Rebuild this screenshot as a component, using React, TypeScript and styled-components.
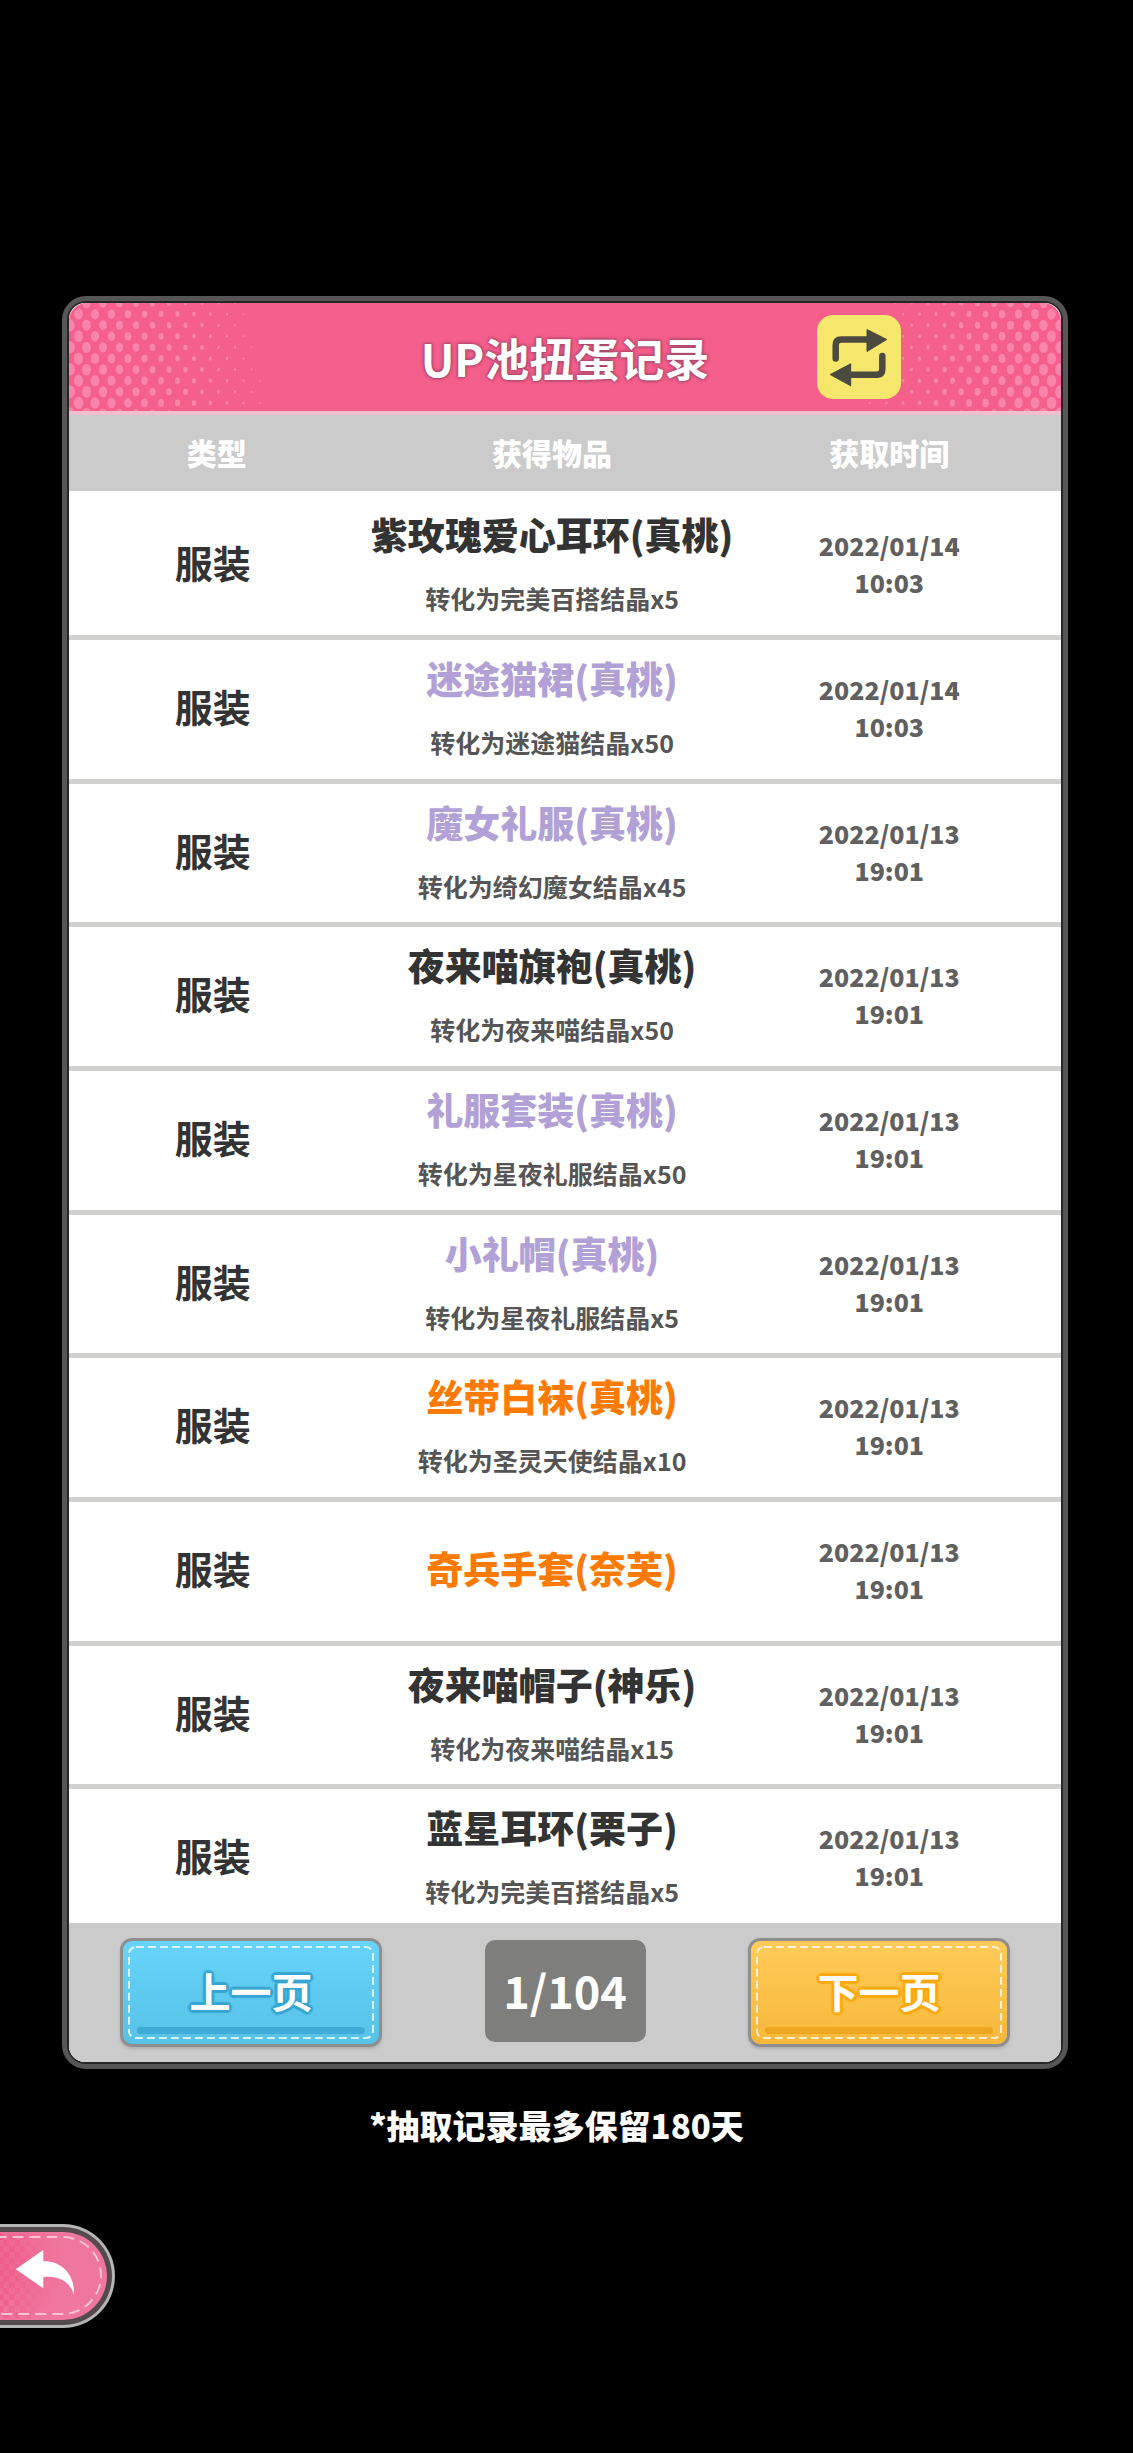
import React, { useState } from "react";
import styled, { createGlobalStyle } from "styled-components";

const GlobalStyle = createGlobalStyle`
  *, *::before, *::after { box-sizing: border-box; }
  html, body { margin: 0; background: #000; }
  body, button { font-family: "Noto Sans CJK SC", "Noto Sans", sans-serif; font-weight: 700; }
`;

type Rarity = "common" | "rare" | "epic";

interface Draw {
  kind: string;
  name: string;
  rarity: Rarity;
  converted?: string;
  date: string;
  time: string;
}

const rarityColor: Record<Rarity, string> = {
  common: "#333333",
  rare: "#b2a1d6",
  epic: "#fd7a03",
};

const draws: Draw[] = [
  { kind: "服装", name: "紫玫瑰爱心耳环(真桃)", rarity: "common", converted: "转化为完美百搭结晶x5", date: "2022/01/14", time: "10:03" },
  { kind: "服装", name: "迷途猫裙(真桃)", rarity: "rare", converted: "转化为迷途猫结晶x50", date: "2022/01/14", time: "10:03" },
  { kind: "服装", name: "魔女礼服(真桃)", rarity: "rare", converted: "转化为绮幻魔女结晶x45", date: "2022/01/13", time: "19:01" },
  { kind: "服装", name: "夜来喵旗袍(真桃)", rarity: "common", converted: "转化为夜来喵结晶x50", date: "2022/01/13", time: "19:01" },
  { kind: "服装", name: "礼服套装(真桃)", rarity: "rare", converted: "转化为星夜礼服结晶x50", date: "2022/01/13", time: "19:01" },
  { kind: "服装", name: "小礼帽(真桃)", rarity: "rare", converted: "转化为星夜礼服结晶x5", date: "2022/01/13", time: "19:01" },
  { kind: "服装", name: "丝带白袜(真桃)", rarity: "epic", converted: "转化为圣灵天使结晶x10", date: "2022/01/13", time: "19:01" },
  { kind: "服装", name: "奇兵手套(奈芙)", rarity: "epic", date: "2022/01/13", time: "19:01" },
  { kind: "服装", name: "夜来喵帽子(神乐)", rarity: "common", converted: "转化为夜来喵结晶x15", date: "2022/01/13", time: "19:01" },
  { kind: "服装", name: "蓝星耳环(栗子)", rarity: "common", converted: "转化为完美百搭结晶x5", date: "2022/01/13", time: "19:01" },
];

const Page = styled.main`
  display: flex;
  flex-direction: column;
  align-items: stretch;
  padding: 296px 0 124px;
  background: #000;
`;

const Panel = styled.section`
  margin: 0 65px 0 62px;
  padding: 2px;
  border: 5px solid #565656;
  border-radius: 24px;
  background: #262626;
`;

const Sheet = styled.div`
  border-radius: 16px;
  overflow: hidden;
  background: #fff;
`;

const Header = styled.header`
  position: relative;
  display: grid;
  grid-template-columns: 1fr auto 1fr;
  align-items: center;
  height: 108px;
  border-radius: 18px 18px 0 0;
  overflow: hidden;
  background: #f55f8c;
`;

const Dots = styled.svg<{ $side: "left" | "right" }>`
  position: absolute;
  top: 0;
  ${(p) => p.$side}: 0;
  transform: ${(p) => (p.$side === "right" ? "scaleX(-1)" : "none")};
  fill: #f985aa;
`;

const Title = styled.h1`
  grid-column: 2;
  margin: 0;
  padding-top: 2px;
  font-size: 45px;
  line-height: 60px;
  font-weight: 700;
  color: #fff;
  text-shadow: 0 0 3px #a8476a, 0 0 3px #a8476a, 0 0 4px #a8476a;
`;

const SwitchButton = styled.button`
  position: relative;
  justify-self: start;
  width: 84px;
  height: 84px;
  margin-left: 108px;
  padding: 0;
  border: 0;
  border-radius: 16px;
  background: #f4e76b;
  cursor: pointer;

  svg { display: block; }
`;

const Table = styled.table`
  width: 100%;
  table-layout: fixed;
  border-collapse: separate;
  border-spacing: 0;
  border-top: 4px solid #efbfd0;
`;

const Column = styled.col<{ $share: string }>`
  width: ${(p) => p.$share};
`;

const HeadCell = styled.th`
  height: 76px;
  padding: 0 0 2px;
  background: #cbcbcb;
  font-size: 30px;
  line-height: 40px;
  font-weight: 900;
  color: #fff;

  &:first-child { padding-left: 8px; }
  &:nth-child(2) { padding-left: 4px; }
  &:last-child { padding-right: 26px; }
`;

const Row = styled.tr``;

const Cell = styled.td`
  height: 144px;
  padding: 0;
  border-top: 5px solid #d0d0cf;
  vertical-align: top;
  text-align: center;

  ${Row}:first-child > & { border-top-color: #fff; }
  ${Row}:nth-child(3n) > & { height: 143px; }
  ${Row}:last-child > & { height: 139px; }
  &:nth-child(2) { padding-left: 4px; }
  &:last-child { padding-right: 26px; }
`;

const Stack = styled.div`
  display: flex;
  flex-direction: column;
  align-items: center;
  justify-content: center;
  height: 132px;
  white-space: nowrap;
`;

const Kind = styled.span`
  font-size: 38px;
  line-height: 56px;
  color: #333;
`;

const ItemName = styled.span<{ $rarity: Rarity }>`
  font-size: 37px;
  line-height: 56px;
  font-weight: 900;
  color: ${(p) => rarityColor[p.$rarity]};
`;

const Converted = styled.span`
  margin-top: 16px;
  font-size: 25px;
  line-height: 40px;
  color: #555;
`;

const Stamp = styled.time`
  padding-top: 4px;
  font-size: 25px;
  line-height: 37px;
  font-weight: 900;
  color: #606060;

  span { display: block; }
`;

const Pager = styled.nav`
  display: flex;
  align-items: center;
  justify-content: space-between;
  height: 139px;
  padding: 0 51px;
  background: #cbcbcb;
`;

type Tone = "blue" | "gold";

const tones: Record<Tone, { top: string; bottom: string; edge: string; bar: string }> = {
  blue: { top: "#68d4fa", bottom: "#57c1e6", edge: "#38a6d2", bar: "#41abd7" },
  gold: { top: "#ffcb58", bottom: "#f7b83c", edge: "#fba910", bar: "#eba71f" },
};

const outline = (c: string) =>
  [[3, 0], [-3, 0], [0, 3], [0, -3], [2, 2], [-2, 2], [2, -2], [-2, -2]]
    .map(([x, y]) => `${x}px ${y}px 1px ${c}`)
    .join(", ");

const PageButton = styled.button<{ $tone: Tone }>`
  position: relative;
  width: 262px;
  height: 109px;
  padding: 0 0 6px;
  border: 3px solid #8f8f8f;
  border-radius: 12px;
  background: linear-gradient(${(p) => tones[p.$tone].top}, ${(p) => tones[p.$tone].bottom});
  box-shadow: 0 2px 3px #b0b0b0;
  font-size: 41px;
  line-height: 56px;
  color: #fff;
  text-shadow: ${(p) => outline(tones[p.$tone].edge)};
  cursor: pointer;

  &::after {
    content: "";
    position: absolute;
    left: 14px;
    right: 14px;
    bottom: 10px;
    height: 7px;
    border-radius: 4px;
    background: ${(p) => tones[p.$tone].bar};
  }
`;

const Stitch = styled.svg`
  position: absolute;
  top: 6px;
  left: 6px;
  width: calc(100% - 12px);
  height: calc(100% - 12px);
  overflow: visible;
  fill: none;
  stroke: #fff;
  stroke-opacity: 0.75;
  stroke-width: 2;
`;

const PageCount = styled.output`
  width: 161px;
  height: 102px;
  margin-bottom: 4px;
  border-radius: 10px;
  background: #7e7e7c;
  font-size: 45px;
  line-height: 100px;
  text-align: center;
  color: #fff;
`;

const Note = styled.p`
  margin: 32px 0 75px;
  padding-right: 20px;
  font-size: 33px;
  line-height: 48px;
  font-weight: 900;
  text-align: center;
  color: #fff;
`;

const BackButton = styled.button`
  position: relative;
  align-self: flex-start;
  display: flex;
  width: 115px;
  height: 104px;
  padding: 0;
  border: 3px solid #b5b5b5;
  border-left: 0;
  border-radius: 0 52px 52px 0;
  background: #544a4d;
  cursor: pointer;
`;

const BackFace = styled.span`
  flex: 1;
  margin: 5px 5px 5px 0;
  border-radius: 0 44px 44px 0;
  overflow: hidden;
  background: radial-gradient(circle at 0 30px, #f0658f, #ef779f 70px);

  svg { display: block; }
`;

function Halftone({ side }: { side: "left" | "right" }) {
  const dots: React.ReactElement[] = [];
  for (let row = 0; row < 11; row++) {
    for (let col = 0; col < 13; col++) {
      const cx = col * 16.5 + (row % 2 ? 9.5 : 1);
      const cy = row * 11.1;
      const size = 1 - cx / 230 - (10 - row) * 0.012;
      if (size > 0.13) {
        dots.push(<ellipse key={`${row}-${col}`} cx={cx} cy={cy} rx={5.1 * size} ry={6.6 * size} />);
      }
    }
  }
  return (
    <Dots $side={side} width="210" height="108" aria-hidden="true">
      {dots}
    </Dots>
  );
}

function SwitchIcon() {
  return (
    <svg width="84" height="84" viewBox="0 0 84 84" aria-hidden="true">
      <g fill="none" stroke="#4b4a3e" strokeWidth="6.5" strokeLinecap="round">
        <path d="M18.7 43.5V30q0-5.5 5.5-5.5H52" />
        <path d="M65.3 41V54.2q0 5.5-5.5 5.5H32" />
      </g>
      <g fill="#4b4a3e" stroke="#4b4a3e" strokeWidth="1" strokeLinejoin="round">
        <path d="M50 14.5L69.7 24.5 50 36.5z" />
        <path d="M13.2 59.6L33.7 48.8V70.8z" />
      </g>
    </svg>
  );
}

function BackIcon() {
  const checks: React.ReactElement[] = [];
  for (let row = 0; row < 14; row++) {
    for (let col = 0; col < 6; col++) {
      const x = col * 11 + (row % 2 ? 5.5 : 0) - 2;
      checks.push(
        <rect key={`${row}-${col}`} x={x} y={row * 6} width="5.5" height="6" opacity={Math.max(0, 0.45 - x / 90)} />
      );
    }
  }
  return (
    <svg width="107" height="88" viewBox="0 8 107 88" aria-hidden="true">
      <g fill="#ee5080" transform="translate(0 10)">{checks}</g>
      <rect x="-60" y="13" width="161" height="77" rx="38.5" fill="none" stroke="#fbc3d5" strokeWidth="2" strokeDasharray="11 6" />
      <path
        d="M15.7 45.3L43.3 26V37.3C58 36.5 75 47 74 71C70 57 58 51.5 43.3 53V64.3z"
        fill="#fff"
      />
    </svg>
  );
}

function StitchedButton({ tone, children, onClick }: { tone: Tone; children: React.ReactNode; onClick: () => void }) {
  return (
    <PageButton type="button" $tone={tone} onClick={onClick}>
      <Stitch aria-hidden="true">
        <rect width="100%" height="100%" rx="7" strokeDasharray="8 4" />
      </Stitch>
      {children}
    </PageButton>
  );
}

export default function App() {
  const total = 104;
  const [page, setPage] = useState(1);

  return (
    <>
      <GlobalStyle />
      <Page>
        <Panel>
          <Sheet>
            <Header>
              <Halftone side="left" />
              <Halftone side="right" />
              <Title>UP池扭蛋记录</Title>
              <SwitchButton type="button" aria-label="切换">
                <SwitchIcon />
              </SwitchButton>
            </Header>
            <Table>
              <colgroup>
                <Column $share="29%" />
                <Column $share="39%" />
                <Column $share="32%" />
              </colgroup>
              <thead>
                <tr>
                  <HeadCell scope="col">类型</HeadCell>
                  <HeadCell scope="col">获得物品</HeadCell>
                  <HeadCell scope="col">获取时间</HeadCell>
                </tr>
              </thead>
              <tbody>
                {draws.map((d, i) => (
                  <Row key={i}>
                    <Cell>
                      <Stack>
                        <Kind>{d.kind}</Kind>
                      </Stack>
                    </Cell>
                    <Cell>
                      <Stack>
                        <ItemName $rarity={d.rarity}>{d.name}</ItemName>
                        {d.converted && <Converted>{d.converted}</Converted>}
                      </Stack>
                    </Cell>
                    <Cell>
                      <Stack>
                        <Stamp>
                          <span>{d.date}</span>
                          <span>{d.time}</span>
                        </Stamp>
                      </Stack>
                    </Cell>
                  </Row>
                ))}
              </tbody>
            </Table>
            <Pager>
              <StitchedButton tone="blue" onClick={() => setPage((p) => Math.max(1, p - 1))}>
                上一页
              </StitchedButton>
              <PageCount>
                {page}/{total}
              </PageCount>
              <StitchedButton tone="gold" onClick={() => setPage((p) => Math.min(total, p + 1))}>
                下一页
              </StitchedButton>
            </Pager>
          </Sheet>
        </Panel>
        <Note>*抽取记录最多保留180天</Note>
        <BackButton type="button" aria-label="返回">
          <BackFace>
            <BackIcon />
          </BackFace>
        </BackButton>
      </Page>
    </>
  );
}
